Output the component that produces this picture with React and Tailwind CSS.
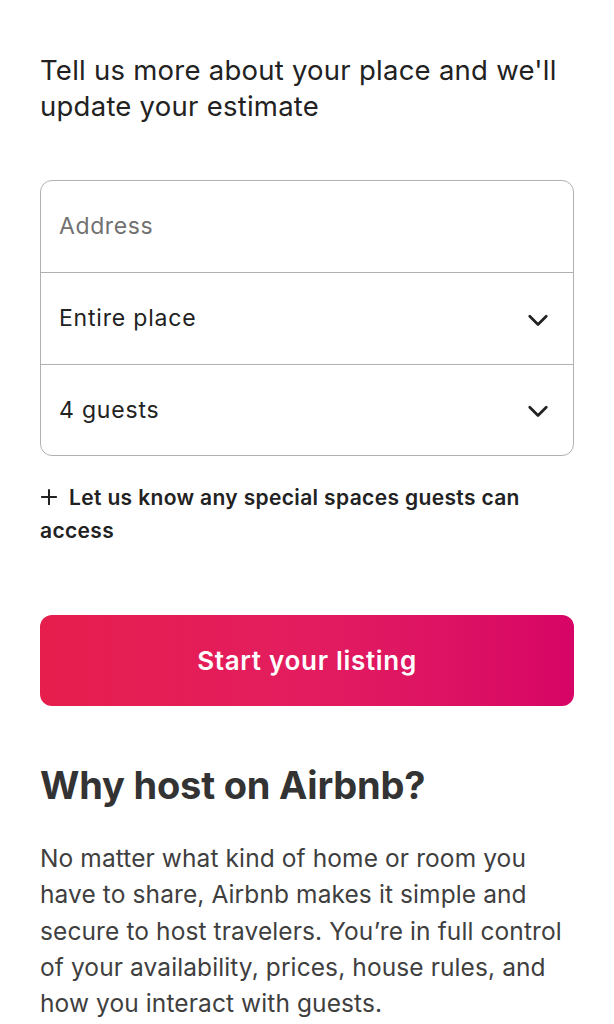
import React from "react";

function Chevron() {
  return (
    <svg width="22" height="22" viewBox="0 0 32 32" fill="none" stroke="#222" strokeWidth="4" strokeLinecap="round" strokeLinejoin="round">
      <path d="M28 12 16 24 4 12" />
    </svg>
  );
}

export default function App() {
  return (
    <div className="min-h-screen bg-white px-10 pt-[52px] pb-10 text-[#222]" style={{ fontFamily: "Inter, 'Liberation Sans', sans-serif" }}>
      <h1 className="text-[27.5px] leading-[36px] font-normal tracking-[0.25px]">
        Tell us more about your place and we'll update your estimate
      </h1>

      {/* form box */}
      <div className="mt-[56px] rounded-xl border border-[#b0b0b0]">
        <div className="h-[91px] flex items-center px-[18px] text-[23px] tracking-[0.6px] text-[#717171]">Address</div>
        <div className="h-[92px] flex items-center justify-between px-[18px] border-t border-[#b0b0b0] text-[23px] tracking-[0.8px]">
          <span>Entire place</span>
          <span className="pr-[6px]"><Chevron /></span>
        </div>
        <div className="h-[91px] flex items-center justify-between px-[18px] border-t border-[#b0b0b0] text-[23px] tracking-[0.8px]">
          <span>4 guests</span>
          <span className="pr-[6px]"><Chevron /></span>
        </div>
      </div>

      <p className="mt-[25px] text-[21px] leading-[33px] font-semibold tracking-[0.35px]">
        <span className="inline-block mr-[11px] align-[-1px]">
          <svg width="18" height="18" viewBox="0 0 16 16" stroke="#222" strokeWidth="1.8" fill="none">
            <path d="M8 1v14M1 8h14" />
          </svg>
        </span>
        Let us know any special spaces guests can access
      </p>

      <button className="mt-[68px] w-full h-[91px] rounded-xl bg-gradient-to-r from-[#e61e4d] via-[#e31c5f] to-[#d70466] text-white text-[26px] font-semibold tracking-[0.7px]">
        Start your listing
      </button>

      <h2 className="mt-[57px] text-[38px] leading-[44px] font-bold text-[#333] tracking-[-0.2px]">Why host on Airbnb?</h2>

      <p className="mt-[33px] text-[24.5px] leading-[36.3px] text-[#3f3f3f] tracking-[0.1px]">
        No matter what kind of home or room you have to share, Airbnb makes it simple and secure to host travelers. You’re in full control of your availability, prices, house rules, and how you interact with guests.
      </p>
    </div>
  );
}
